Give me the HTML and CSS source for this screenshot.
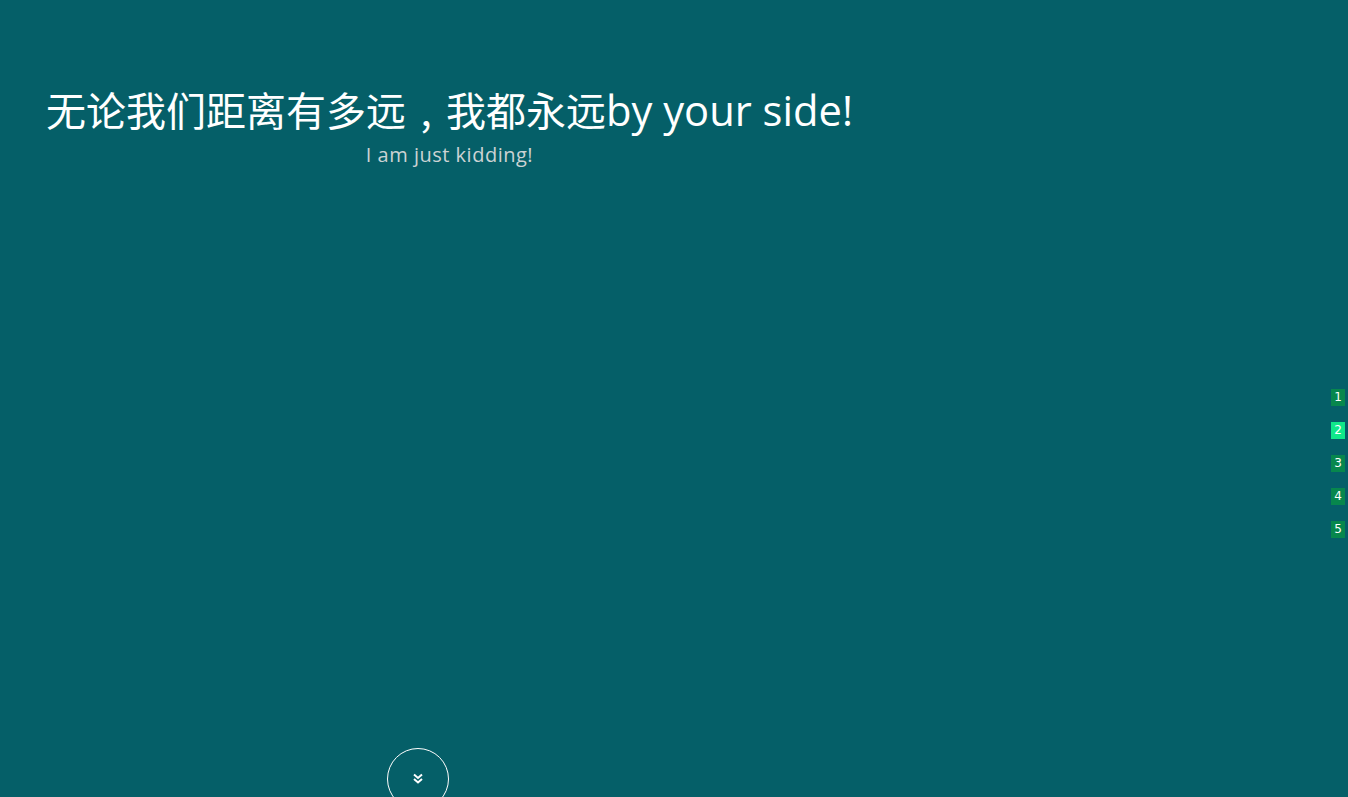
FILE: index.html
```html
<!DOCTYPE html>
<html lang="zh-CN">
<head>
<meta charset="utf-8">
<title>by your side</title>
<link rel="stylesheet" href="styles.css">
</head>
<body>
<main class="page">
  <section class="hero">
    <div class="titles">
      <h1 class="title">无论我们距离有多远<span class="punct">，</span>我都永远<span class="latin">by your side!</span></h1>
      <p class="subtitle">I am just kidding!</p>
    </div>
    <button class="down" type="button" aria-label="next">
      <svg width="12" height="12" viewBox="0 0 12 12" aria-hidden="true">
        <path d="M2 1.5 L6 5 L10 1.5 M2 6 L6 9.5 L10 6" fill="none" stroke="#fff" stroke-width="2"/>
      </svg>
    </button>
  </section>
  <nav class="dots">
    <a class="dot">1</a>
    <a class="dot active">2</a>
    <a class="dot">3</a>
    <a class="dot">4</a>
    <a class="dot">5</a>
  </nav>
</main>
</body>
</html>
```
FILE: styles.css
```css
html, body {
  margin: 0;
  padding: 0;
  height: 100%;
  overflow: hidden;
}
body {
  background: #055f68;
  font-family: "Open Sans", "Noto Sans CJK SC", sans-serif;
  color: #fff;
}
.page {
  position: relative;
  height: 797px;
}
.hero {
  display: flex;
  flex-direction: column;
  height: 100%;
  box-sizing: border-box;
  padding: 81px 0 0 46px;
}
.titles {
  display: inline-flex;
  flex-direction: column;
  align-items: center;
  align-self: flex-start;
}
.title {
  margin: 0;
  font-family: "Noto Sans CJK SC", sans-serif;
  font-weight: 400;
  font-size: 40px;
  line-height: 56px;
  white-space: nowrap;
}
.punct {
  display: inline-block;
  width: 40px;
  text-align: center;
  font-feature-settings: "pwid";
}
.latin {
  font-family: "Open Sans", sans-serif;
  font-size: 41.7px;
}
.subtitle {
  margin: 2px 0 0;
  font-size: 20px;
  letter-spacing: 0.5px;
  line-height: 30px;
  color: #ccd3d4;
}
.down {
  margin-top: auto;
  margin-left: 341px;
  margin-bottom: -13px;
  width: 62px;
  height: 62px;
  border-radius: 50%;
  border: 1px solid #fff;
  background: transparent;
  display: flex;
  align-items: center;
  justify-content: center;
  padding: 0;
  box-sizing: border-box;
}
.dots {
  position: absolute;
  right: 3px;
  top: 389px;
  display: flex;
  flex-direction: column;
  gap: 16px;
}
.dot {
  width: 14px;
  height: 17px;
  background: #07874d;
  color: #fff;
  font-family: "DejaVu Sans", sans-serif;
  font-size: 12px;
  line-height: 17px;
  text-align: center;
}
.dot.active {
  background: #10e88a;
}
```
